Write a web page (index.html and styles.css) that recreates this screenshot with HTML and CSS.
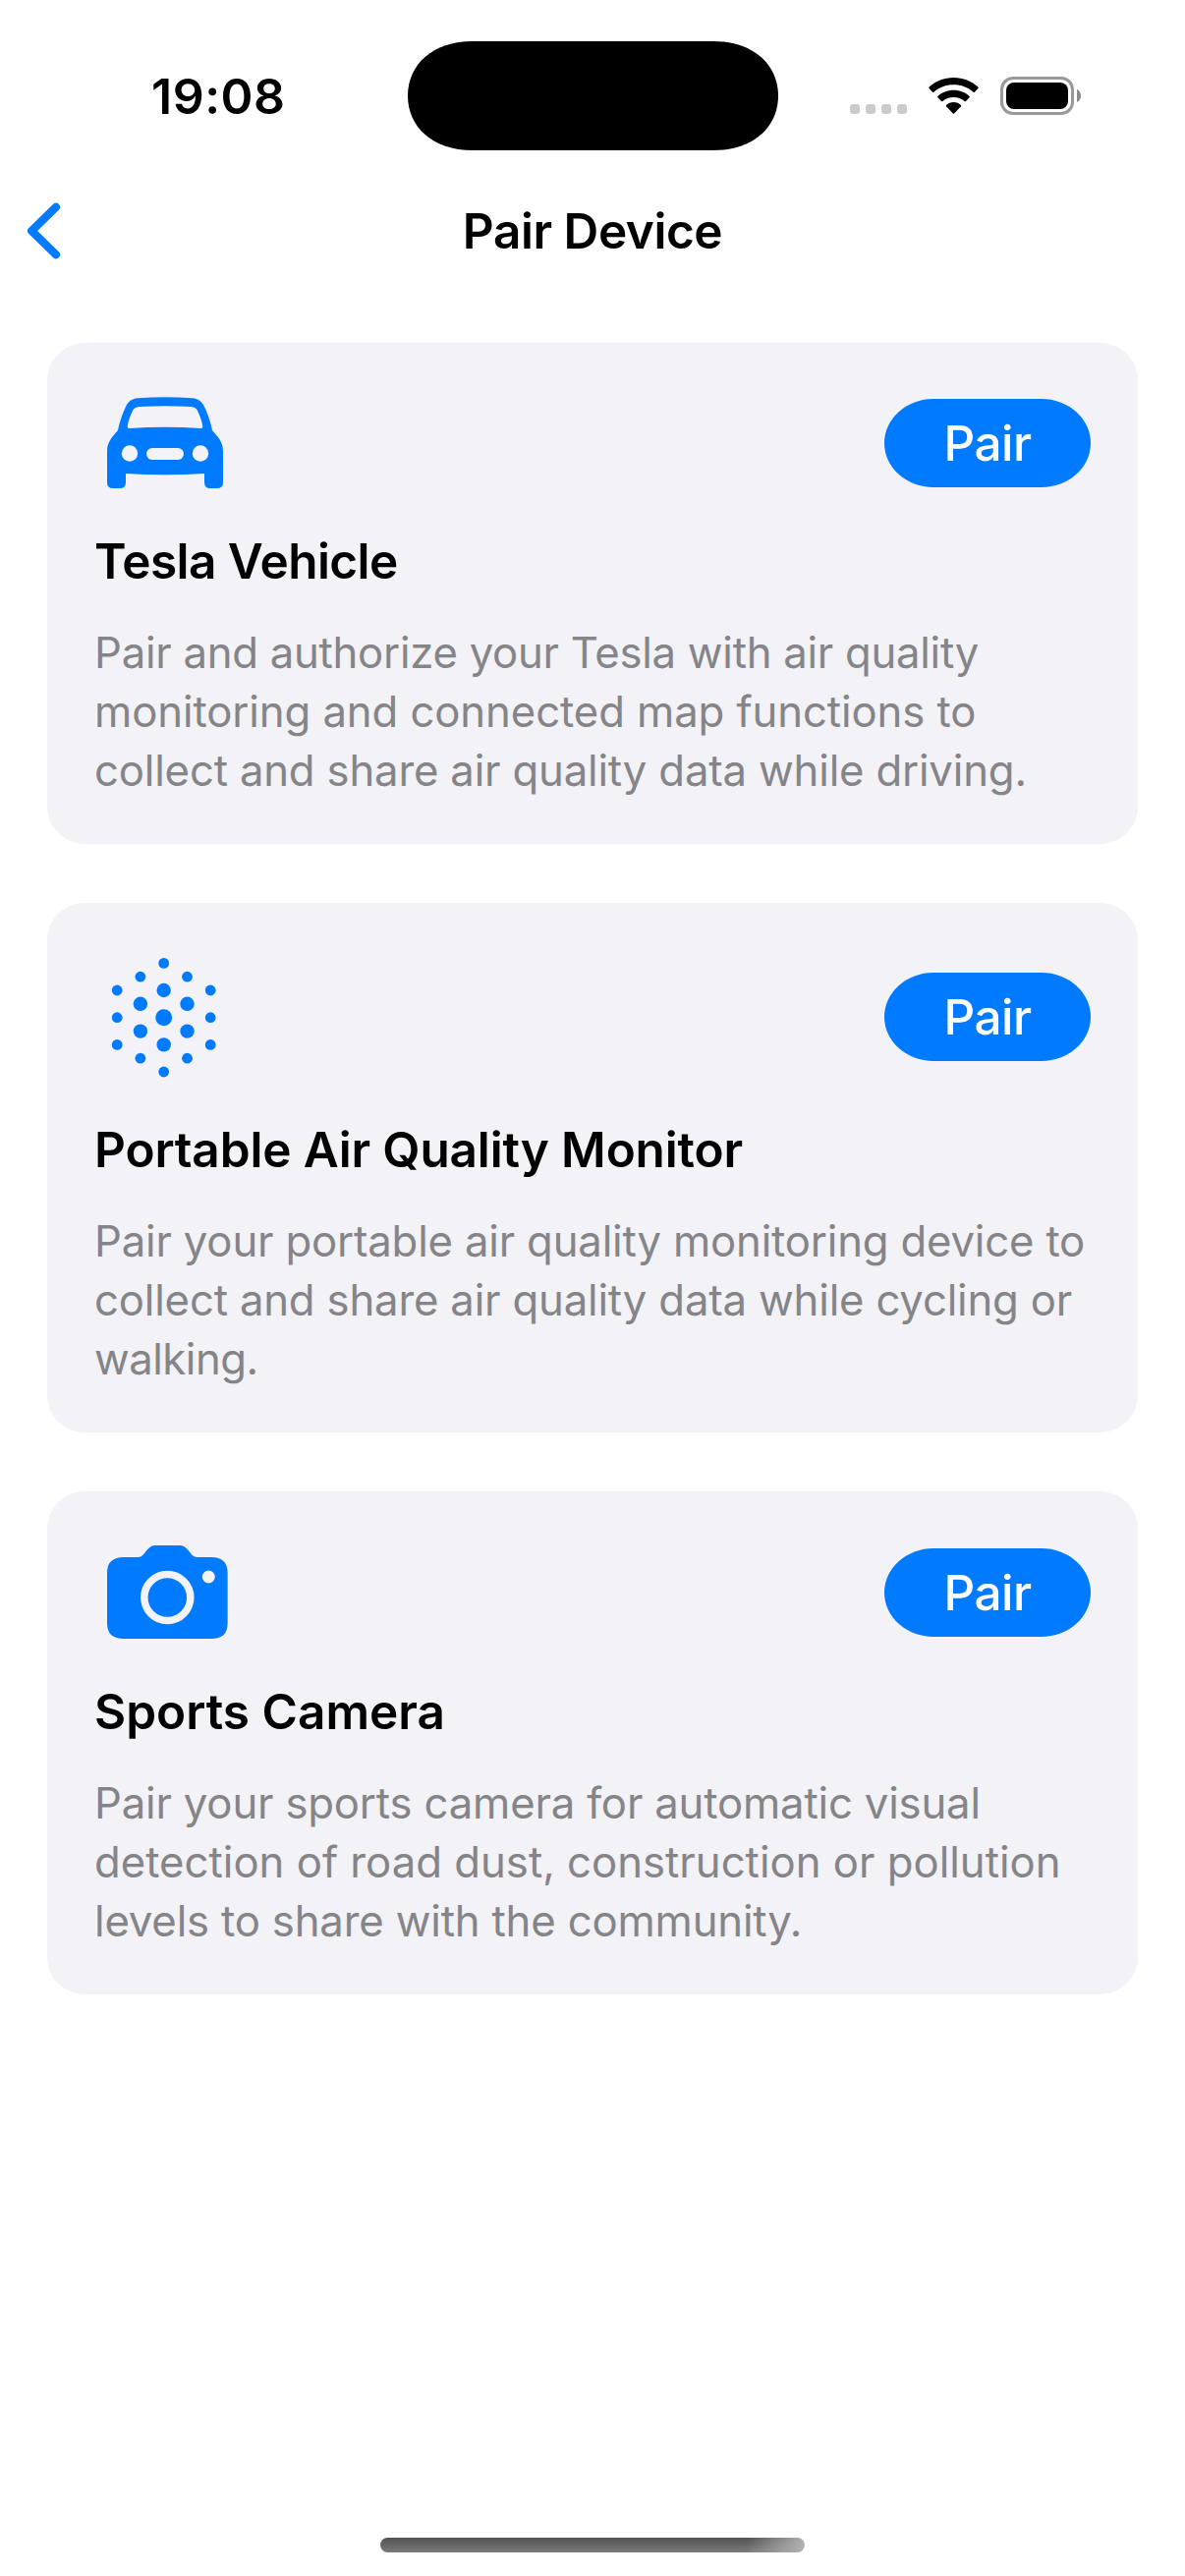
FILE: index.html
```html
<!DOCTYPE html>
<html lang="en">
<head>
<meta charset="utf-8">
<title>Pair Device</title>
<link rel="stylesheet" href="styles.css">
</head>
<body>
<div class="screen">
  <header class="status">
    <span class="time">19:08</span>
    <svg class="island" viewBox="0 0 377 111"><path d="M66 0H311C352 0 377 24 377 55.5S352 111 311 111H66C25 111 0 87 0 55.5S25 0 66 0Z"/></svg>
    <div class="indicators">
      <svg class="cell" viewBox="0 0 58 10" fill="#ccc"><rect width="10" height="10" rx="3"/><rect x="16" width="10" height="10" rx="3"/><rect x="32" width="10" height="10" rx="3"/><rect x="48" width="10" height="10" rx="3"/></svg>
      <svg class="wifi" viewBox="0 0 51 37"><path d="M25.500 0C35.200 0 44 3.600 50.400 9.600Q51 10.200 50.400 10.900L47 14.700Q46.300 15.400 45.600 14.700C40.200 9.900 33.300 7.300 25.500 7.300S10.800 9.900 5.400 14.700Q4.700 15.400 4 14.700L.6 10.900Q0 10.200.6 9.600C7 3.600 15.800 0 25.500 0Z"/><path d="M25.500 12.700C31.900 12.700 37.400 15 41.600 18.900Q42.200 19.500 41.600 20.200L38 23.900Q37.300 24.600 36.600 23.900C33.500 21.300 29.800 19.900 25.500 19.900S17.500 21.300 14.400 23.900Q13.700 24.600 13 23.900L9.400 20.200Q8.800 19.500 9.400 18.900C13.600 15 19.100 12.700 25.500 12.700Z"/><path d="M25.500 25C28.400 25 31 26 33 27.900Q33.500 28.500 33 29.200L26.100 36.500Q25.500 37 24.900 36.500L18 29.200Q17.500 28.500 18 27.900C20 26 22.600 25 25.500 25Z"/></svg>
      <svg class="battery" viewBox="0 0 83 39"><rect x="1.500" y="1.500" width="72" height="36" rx="11.500" fill="none" stroke="#999" stroke-width="3"/><rect x="6" y="6" width="63" height="27" rx="8"/><path d="M78 13C80.500 14 82 16.500 82 19.500S80.500 25 78 26Z" fill="#8c8c8c"/></svg>
    </div>
  </header>
  <nav class="navbar">
    <svg class="back" viewBox="0 0 34 58"><path d="M29 4.800 4.200 29 29 53.200" fill="none" stroke="#007aff" stroke-width="8.200" stroke-linecap="round" stroke-linejoin="round"/></svg>
    <h1 class="title">Pair Device</h1>
  </nav>
  <main class="cards">
    <section class="card card-car">
      <div class="card-head">
        <svg class="icon" viewBox="0 0 118 93" width="118" height="93"><path fill-rule="evenodd" d="M31 1.200Q59-.8 87 1.200C93 1.800 97 5 99.500 11C103 19 105.500 26 107 34C113 41 118 46 118 55V87Q118 93 112 93H105Q99 93 99 87V78Q59 80.500 19 78V87Q19 93 13 93H6Q0 93 0 87V55C0 46 5 41 11 34C12.500 26 15 19 18.500 11C21 5 25 1.800 31 1.200ZM32 10Q59 8.500 86 10Q90 10.300 91.500 13C95 20 96.500 25 97.300 30Q97.500 32 95.500 31.900Q59 29.500 22.500 31.900Q20.500 32 20.700 30C21.500 25 23 20 26.500 13Q28 10.300 32 10Z"/><g fill="#f2f2f7"><circle cx="23" cy="57.500" r="8.200"/><circle cx="95" cy="57.500" r="8.200"/><rect x="40" y="52" width="38" height="12" rx="6"/></g></svg>
        <button class="pair">Pair</button>
      </div>
      <h2 class="name name-car">Tesla Vehicle</h2>
      <p class="text"><span class="track-3">Pair and authorize your Tesla with air quality</span><br><span class="track-1">monitoring and connected map functions to</span><br><span class="track-2">collect and share air quality data while driving.</span></p>
    </section>
    <section class="card card-monitor">
      <div class="card-head">
        <svg class="icon" viewBox="0 0 116 122" width="116" height="122"><g transform="translate(57.700 60.700)"><circle r="8.500"/><circle cy="-27.700" r="7.200"/><circle cy="27.700" r="7.200"/><circle cx="-23.800" cy="-13.900" r="7.200"/><circle cx="23.800" cy="-13.900" r="7.200"/><circle cx="-23.800" cy="13.900" r="7.200"/><circle cx="23.800" cy="13.900" r="7.200"/><circle cy="-55.300" r="5.400"/><circle cy="55.300" r="5.400"/><circle cx="-23.800" cy="-41.500" r="5.400"/><circle cx="23.800" cy="-41.500" r="5.400"/><circle cx="-23.800" cy="41.500" r="5.400"/><circle cx="23.800" cy="41.500" r="5.400"/><circle cx="-47.500" cy="-27.700" r="5.400"/><circle cx="-47.500" r="5.400"/><circle cx="-47.500" cy="27.700" r="5.400"/><circle cx="47.500" cy="-27.700" r="5.400"/><circle cx="47.500" r="5.400"/><circle cx="47.500" cy="27.700" r="5.400"/></g></svg>
        <button class="pair">Pair</button>
      </div>
      <h2 class="name name-monitor">Portable Air Quality Monitor</h2>
      <p class="text"><span class="track-2">Pair your portable air quality monitoring device to</span><br><span class="track-2">collect and share air quality data while cycling or</span><br><span class="track-5">walking.</span></p>
    </section>
    <section class="card card-camera">
      <div class="card-head">
        <svg class="icon" viewBox="0 0 123 95" width="123" height="95"><path d="M50 0H73C78 0 80 2 83 5.500C86 9 87 12 92 12H106C117 12 122.600 17 122.600 28V79C122.600 90 117 95 106 95H17C6 95 0 90 0 79V28C0 17 6 12 17 12H31C36 12 37 9 40 5.500C43 2 45 0 50 0Z"/><circle cx="61.300" cy="53" r="23.500" fill="none" stroke="#f2f2f7" stroke-width="7.500"/><circle cx="103.300" cy="32" r="6.500" fill="#f2f2f7"/></svg>
        <button class="pair">Pair</button>
      </div>
      <h2 class="name">Sports Camera</h2>
      <p class="text"><span class="track-2">Pair your sports camera for automatic visual</span><br><span>detection of road dust, construction or pollution</span><br><span class="track-2">levels to share with the community.</span></p>
    </section>
  </main>
  <footer class="home"><div class="home-bar"></div></footer>
</div>
</body>
</html>
```
FILE: styles.css
```css
* { box-sizing: border-box; }
body { margin: 0; background: #fff; }
.screen {
  width: 1206px;
  height: 2622px;
  display: flex;
  flex-direction: column;
  overflow: hidden;
  font-family: Inter, "Liberation Sans", sans-serif;
  color: #000;
}
svg { display: block; flex: none; }
.status {
  height: 177px;
  padding: 41.500px 106px 0 154px;
  display: grid;
  grid-template-columns: 260.500px 377px 1fr;
  align-items: start;
}
.time { font-size: 50px; line-height: 111px; font-weight: 600; letter-spacing: .5px; padding-top: 1px; }
.island { width: 377px; height: 111px; }
.indicators { display: flex; justify-content: flex-end; padding-top: 36.500px; }
.cell { width: 58px; height: 10px; margin: 28px 22px 0 0; }
.wifi { width: 51px; height: 37px; margin: 1px 22px 0 0; }
.battery { width: 83px; height: 39px; margin-right: -1px; }
.navbar {
  height: 132px;
  display: grid;
  grid-template-columns: 1fr auto 1fr;
  align-items: start;
  padding: 0 28px;
}
.back { width: 34px; height: 58px; margin-top: 28.500px; }
.title { margin: 0; font-size: 49.500px; line-height: 60px; font-weight: 600; padding-top: 28px; letter-spacing: -.45px; }
.cards { margin: 40px 48px 0; display: flex; flex-direction: column; gap: 60px; }
.card { height: 510px; padding: 48px; background: #f2f2f7; border-radius: 38px; }
.card-monitor { height: 539px; }
.card-camera { height: 512px; }
.card-head { display: flex; justify-content: space-between; align-items: center; height: 108px; padding-left: 13px; }
.card-monitor .card-head { height: 137px; }
.card-camera .card-head { height: 110px; }
.icon { fill: #007aff; }
.card-car .icon { margin-bottom: 1px; }
.card-camera .icon { margin-bottom: 1px; }
.pair {
  width: 210px;
  height: 90px;
  padding: 0;
  border: 0;
  border-radius: 50px / 45px;
  background: #007aff;
  color: #fff;
  font: 500 49.500px/90px Inter, "Liberation Sans", sans-serif;
  letter-spacing: -.6px;
}
.card-monitor .pair { margin-bottom: 1px; }
.name { margin: 36px 0 0; font-size: 49.500px; line-height: 60px; font-weight: 600; white-space: nowrap; }
.name-car { letter-spacing: -.55px; }
.name-monitor { letter-spacing: -.15px; }
.text { margin: 34px 0 0; font-size: 43.700px; line-height: 60px; color: #858589; white-space: nowrap; }
.track-1 { letter-spacing: -.1px; }
.track-2 { letter-spacing: -.18px; }
.track-3 { letter-spacing: -.27px; }
.track-5 { letter-spacing: -.5px; }
.home { margin-top: auto; display: flex; justify-content: center; padding-bottom: 24px; }
.home-bar {
  width: 432px;
  height: 15px;
  border-radius: 8px;
  background: linear-gradient(100deg, transparent 86%, #b4b4b4 100%), linear-gradient(#525252, #7b7b7b);
}
```
